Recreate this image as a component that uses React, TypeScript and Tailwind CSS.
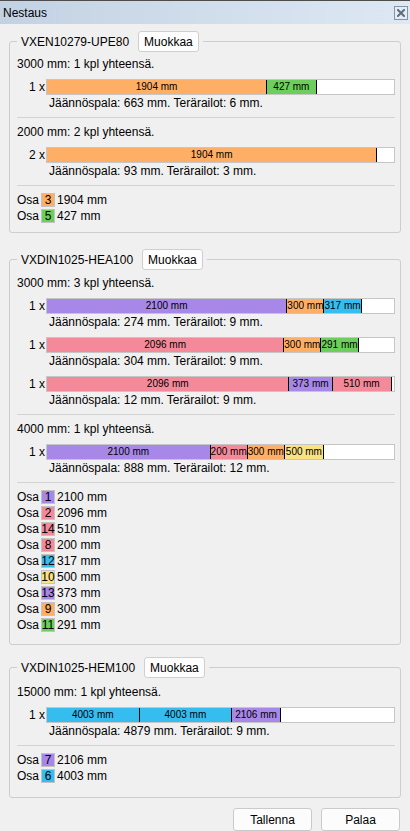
import React from "react";

type Part = { len: number; color: string };
type Cut = { count: number; parts: Part[]; rest: number; kerf: number };
type Stock = { stock: number; total: number; cuts: Cut[] };
type Piece = { no: number; len: number; color: string };
type Group = {
  name: string;
  stocks: Stock[];
  pieces: Piece[];
  top: string;
  pt: string;
  pb: string;
};

const ORANGE = "bg-[#ffae66]";
const GREEN = "bg-[#6ccf5b]";
const PURPLE = "bg-[#a787e8]";
const PINK = "bg-[#f48a99]";
const CYAN = "bg-[#36bdf0]";
const YELLOW = "bg-[#f8e282]";

const groups: Group[] = [
  {
    name: "VXEN10279-UPE80",
    top: "mt-[7px]",
    pt: "pt-[4px]",
    pb: "pb-[8px]",
    stocks: [
      {
        stock: 3000,
        total: 1,
        cuts: [
          {
            count: 1,
            parts: [
              { len: 1904, color: ORANGE },
              { len: 427, color: GREEN },
            ],
            rest: 663,
            kerf: 6,
          },
        ],
      },
      {
        stock: 2000,
        total: 2,
        cuts: [{ count: 2, parts: [{ len: 1904, color: ORANGE }], rest: 93, kerf: 3 }],
      },
    ],
    pieces: [
      { no: 3, len: 1904, color: ORANGE },
      { no: 5, len: 427, color: GREEN },
    ],
  },
  {
    name: "VXDIN1025-HEA100",
    top: "mt-[16px]",
    pt: "pt-[5px]",
    pb: "pb-[11px]",
    stocks: [
      {
        stock: 3000,
        total: 3,
        cuts: [
          {
            count: 1,
            parts: [
              { len: 2100, color: PURPLE },
              { len: 300, color: ORANGE },
              { len: 317, color: CYAN },
            ],
            rest: 274,
            kerf: 9,
          },
          {
            count: 1,
            parts: [
              { len: 2096, color: PINK },
              { len: 300, color: ORANGE },
              { len: 291, color: GREEN },
            ],
            rest: 304,
            kerf: 9,
          },
          {
            count: 1,
            parts: [
              { len: 2096, color: PINK },
              { len: 373, color: PURPLE },
              { len: 510, color: PINK },
            ],
            rest: 12,
            kerf: 9,
          },
        ],
      },
      {
        stock: 4000,
        total: 1,
        cuts: [
          {
            count: 1,
            parts: [
              { len: 2100, color: PURPLE },
              { len: 200, color: PINK },
              { len: 300, color: ORANGE },
              { len: 500, color: YELLOW },
            ],
            rest: 888,
            kerf: 12,
          },
        ],
      },
    ],
    pieces: [
      { no: 1, len: 2100, color: PURPLE },
      { no: 2, len: 2096, color: PINK },
      { no: 14, len: 510, color: PINK },
      { no: 8, len: 200, color: PINK },
      { no: 12, len: 317, color: CYAN },
      { no: 10, len: 500, color: YELLOW },
      { no: 13, len: 373, color: PURPLE },
      { no: 9, len: 300, color: ORANGE },
      { no: 11, len: 291, color: GREEN },
    ],
  },
  {
    name: "VXDIN1025-HEM100",
    top: "mt-[12px]",
    pt: "pt-[6px]",
    pb: "pb-[13px]",
    stocks: [
      {
        stock: 15000,
        total: 1,
        cuts: [
          {
            count: 1,
            parts: [
              { len: 4003, color: CYAN },
              { len: 4003, color: CYAN },
              { len: 2106, color: PURPLE },
            ],
            rest: 4879,
            kerf: 9,
          },
        ],
      },
    ],
    pieces: [
      { no: 7, len: 2106, color: PURPLE },
      { no: 6, len: 4003, color: CYAN },
    ],
  },
];

function CutBar({ cut, stock }: { cut: Cut; stock: number }) {
  const used = cut.parts.reduce((a, p) => a + p.len, 0);
  const free = Math.max(stock - used, 0);
  return (
    <div className="mt-[7px]">
      <div className="flex h-[16px] items-center">
        <div className="w-[29px] shrink-0 pr-[1px] text-right leading-[16px]">{cut.count} x</div>
        {/* segments keep at least their label width; the rest shrink in proportion */}
        <div className="flex h-[16px] min-w-0 flex-1 overflow-hidden border border-[#c6c6c6] bg-white">
          {cut.parts.map((p, i) => (
            <div
              key={i}
              style={{ flex: `0 1 ${(p.len / stock) * 100}%` }}
              className={`${p.color} h-full min-w-min overflow-hidden whitespace-nowrap border-r border-black text-center text-[10px] leading-[14px]`}
            >
              {p.len} mm
            </div>
          ))}
          <div style={{ flex: `0 1 ${(free / stock) * 100}%` }} className="h-full min-w-0" />
        </div>
      </div>
      <div className="pl-[32px] leading-[16px]">
        Jäännöspala: {cut.rest} mm. Terärailot: {cut.kerf} mm.
      </div>
    </div>
  );
}

function Separator() {
  return <div className="my-[6px] h-px bg-[#d3d3d3]" />;
}

function GroupBox({ g }: { g: Group }) {
  return (
    <fieldset
      className={`${g.top} mx-[9px] min-w-0 rounded-[3px] border border-[#cdcdcd] pl-[7px] pr-[5px] ${g.pt} ${g.pb}`}
    >
      <legend className="px-[4px]">
        <div className="flex h-[21px] items-center">
          <span className="leading-[16px]">{g.name}</span>
          <button className="ml-[9px] h-[21px] rounded-[3px] border border-[#cfcfcf] bg-[#fdfdfd] px-[5px] leading-[16px]">
            Muokkaa
          </button>
        </div>
      </legend>
      {g.stocks.map((s, i) => (
        <div key={i}>
          <div className="leading-[16px]">
            {s.stock} mm: {s.total} kpl yhteensä.
          </div>
          {s.cuts.map((c, j) => (
            <CutBar key={j} cut={c} stock={s.stock} />
          ))}
          <Separator />
        </div>
      ))}
      <div className="flex flex-col">
        {g.pieces.map((p) => (
          <div key={p.no} className="flex h-[16px] items-center leading-[16px]">
            <span>Osa</span>
            <span
              className={`${p.color} ml-[2px] flex h-[14px] w-[14px] items-center justify-center overflow-visible border border-[#c3c3c3] leading-[12px]`}
            >
              {p.no}
            </span>
            <span className="ml-[2px]">{p.len} mm</span>
          </div>
        ))}
      </div>
    </fieldset>
  );
}

export default function App() {
  return (
    <div
      className="relative h-[831px] w-[410px] overflow-hidden bg-[#f0f0f0] text-[12px] text-black"
      style={{ fontFamily: '"Liberation Sans", Arial, sans-serif' }}
    >
      <div className="flex h-[24px] items-center justify-between border-t border-[#4d4d4d] bg-linear-to-r from-[#c3d2e3] to-[#dde8f3] pl-[3px] pr-[2px]">
        <span className="leading-[16px]">Nestaus</span>
        <div className="flex h-[14px] w-[14px] items-center justify-center border border-[#8594a5] bg-[#e3ebf4]">
          <svg width="8" height="8" viewBox="0 0 8 8">
            <path d="M1 1 L7 7 M7 1 L1 7" stroke="#5f6d7d" strokeWidth="2" strokeLinecap="square" />
          </svg>
        </div>
      </div>

      {groups.map((g) => (
        <GroupBox key={g.name} g={g} />
      ))}

      <div className="mt-[10px] flex justify-end gap-[9px] pr-[10px]">
        <button className="h-[23px] w-[79px] rounded-[3px] border border-[#cacaca] bg-[#fcfcfc] leading-[16px]">
          Tallenna
        </button>
        <button className="h-[23px] w-[79px] rounded-[3px] border border-[#cacaca] bg-[#fcfcfc] leading-[16px]">
          Palaa
        </button>
      </div>
    </div>
  );
}
